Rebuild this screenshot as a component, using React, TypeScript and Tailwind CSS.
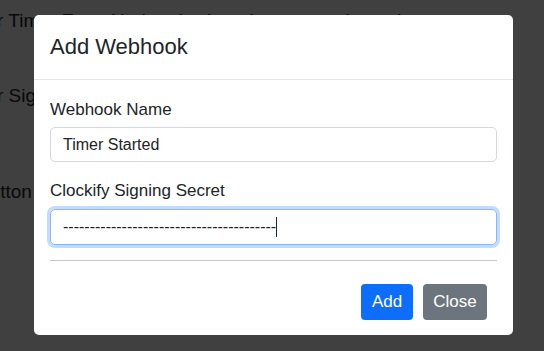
export default function App() {
  const secret = "-".repeat(40);
  return (
    <div className="relative h-[351px] w-[544px] overflow-hidden bg-white font-['Liberation_Sans',Arial,sans-serif] text-[#212529]">
      {/* page behind the modal */}
      <div className="flex flex-col pt-[9px] text-[19px] leading-[24px] whitespace-nowrap">
        <p className="-ml-[3px]">r Timer Entry Updated, when the current timer changes</p>
        <p className="mt-[51px] -ml-[3px]">r Signing Secret</p>
        <p className="mt-[72px] -ml-[23px]">Button</p>
      </div>

      <div className="absolute inset-0 bg-black/75" />

      <div
        role="dialog"
        aria-labelledby="add-webhook-title"
        className="absolute left-[34px] top-[15px] w-[479px] rounded-[5px] bg-white"
      >
        <div className="border-b border-[#e3e3ea] px-4 py-[19px]">
          <h5 id="add-webhook-title" className="text-[22px] leading-[26px]">
            Add Webhook
          </h5>
        </div>

        <div className="px-4 pt-[17px]">
          <label className="block text-[17px] leading-[25px]">Webhook Name</label>
          <div className="mt-[5px] flex h-[35px] items-center rounded-[5px] border border-[#d5d8dc] px-3 text-[16px]">
            Timer Started
          </div>

          <label className="mt-[16px] block text-[17px] leading-[25px]">Clockify Signing Secret</label>
          <div className="mt-[6px] flex h-[36px] items-center rounded-[5px] border border-[#86b7fe] px-3 text-[16px] ring-[3px] ring-[#c2dbfe]">
            <span>{secret}</span>
            <span className="h-[20px] w-px bg-[#212529]" />
          </div>

          <hr className="mt-[15px] border-[#c8c8c8]" />

          <div className="flex justify-end gap-[10px] pt-[23px] pb-[15px] pr-[10px]">
            <button className="h-[36px] w-[52px] rounded-[4px] bg-[#0d6efd] text-[17px] text-white">Add</button>
            <button className="h-[36px] w-[64px] rounded-[4px] bg-[#6c757d] text-[17px] text-white">Close</button>
          </div>
        </div>
      </div>
    </div>
  );
}
